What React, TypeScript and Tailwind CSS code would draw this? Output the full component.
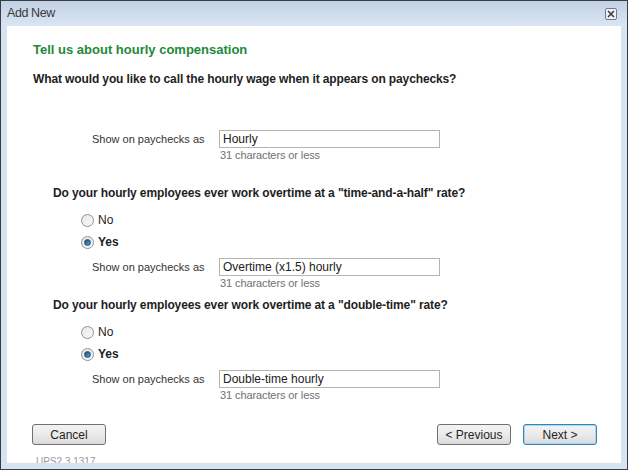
import React from "react";

const font = { fontFamily: '"Liberation Sans", Arial, sans-serif' };

const Radio = ({ checked, label }: { checked?: boolean; label: string }) => (
  <div className="flex items-center h-[22px] pl-[74px]">
    <span className="w-[13px] h-[13px] rounded-full border border-[#8f9092] bg-gradient-to-br from-[#e6e6e6] to-[#fbfbfb] flex items-center justify-center">
      {checked && (
        <span className="w-[7px] h-[7px] rounded-full bg-gradient-to-br from-[#1b4f7a] to-[#4fa6de] border border-[#214d72]" />
      )}
    </span>
    <span className={`ml-[4px] text-[12px] text-[#1e1e1e] ${checked ? "font-bold" : ""}`}>{label}</span>
  </div>
);

const PaycheckField = ({ value, className = "" }: { value: string; className?: string }) => (
  <div className={`pl-[85px] ${className}`}>
    <div className="flex items-center">
      <span className="w-[127px] text-[11px] text-[#333]">Show on paychecks as</span>
      <div className="w-[221px] h-[18px] border border-[#b4b4b4] bg-white flex items-center pl-[3px] text-[12px] text-[#222]">
        {value}
      </div>
    </div>
    <div className="pl-[128px] text-[11px] leading-[14px] text-[#707070] tracking-[-0.1px]">31 characters or less</div>
  </div>
);

const Button = ({ children, primary }: { children: React.ReactNode; primary?: boolean }) => (
  <button
    className={`w-[74px] h-[21px] rounded-[3px] border text-[12px] text-[#1e1e1e] bg-gradient-to-b from-[#f3f3f3] via-[#ebebeb] to-[#dadada] ${
      primary ? "border-[#3c7fb1] shadow-[inset_0_0_0_1px_#a7d8f5]" : "border-[#707070]"
    }`}
  >
    {children}
  </button>
);

const Question = ({ children, className = "" }: { children: React.ReactNode; className?: string }) => (
  <div className={`text-[12px] leading-[16px] font-bold text-[#1e1e1e] tracking-[-0.12px] ${className}`}>{children}</div>
);

export default function App() {
  return (
    <div style={font} className="w-[628px] h-[470px] border border-[#3a3d42] bg-[#d7e3f1] flex flex-col overflow-hidden">
      <div className="h-[25px] shrink-0 flex items-center justify-between pl-[6px] pr-[10px] bg-gradient-to-b from-[#c2d2e5] to-[#d9e5f2]">
        <span className="text-[12.5px] tracking-[-0.4px] text-[#3a3a3a]">Add New</span>
        <span className="w-[12px] h-[12px] border border-[#6e7b8b] rounded-[2px] bg-[#eef2f7] flex items-center justify-center">
          <svg width="8" height="8" viewBox="0 0 8 8">
            <path d="M1 1 L7 7 M7 1 L1 7" stroke="#3b3b3b" strokeWidth="1.6" />
          </svg>
        </span>
      </div>
      <div className="flex-1 mx-[6px] mb-[6px] bg-white relative overflow-hidden flex flex-col">
        <div className="pl-[26px] pt-[15px] text-[13px] leading-[18px] font-bold text-[#23893a]">
          Tell us about hourly compensation
        </div>
        <Question className="pl-[26px] mt-[12px]">
          What would you like to call the hourly wage when it appears on paychecks?
        </Question>
        <PaycheckField value="Hourly" className="mt-[43px]" />
        <Question className="pl-[46px] mt-[23px]">
          Do your hourly employees ever work overtime at a "time-and-a-half" rate?
        </Question>
        <div className="mt-[8px]">
          <Radio label="No" />
          <Radio label="Yes" checked />
        </div>
        <PaycheckField value="Overtime (x1.5) hourly" className="mt-[5px]" />
        <Question className="pl-[46px] mt-[7px]">
          Do your hourly employees ever work overtime at a "double-time" rate?
        </Question>
        <div className="mt-[8px]">
          <Radio label="No" />
          <Radio label="Yes" checked />
        </div>
        <PaycheckField value="Double-time hourly" className="mt-[5px]" />
        <div className="flex justify-between pl-[25px] pr-[24px] mt-[22px]">
          <Button>Cancel</Button>
          <div className="flex gap-[12px]">
            <Button>&lt; Previous</Button>
            <Button primary>Next &gt;</Button>
          </div>
        </div>
        <div className="pl-[29px] mt-[11px] text-[10px] leading-[12px] text-[#999]">UPS2.3.1317</div>
      </div>
    </div>
  );
}
